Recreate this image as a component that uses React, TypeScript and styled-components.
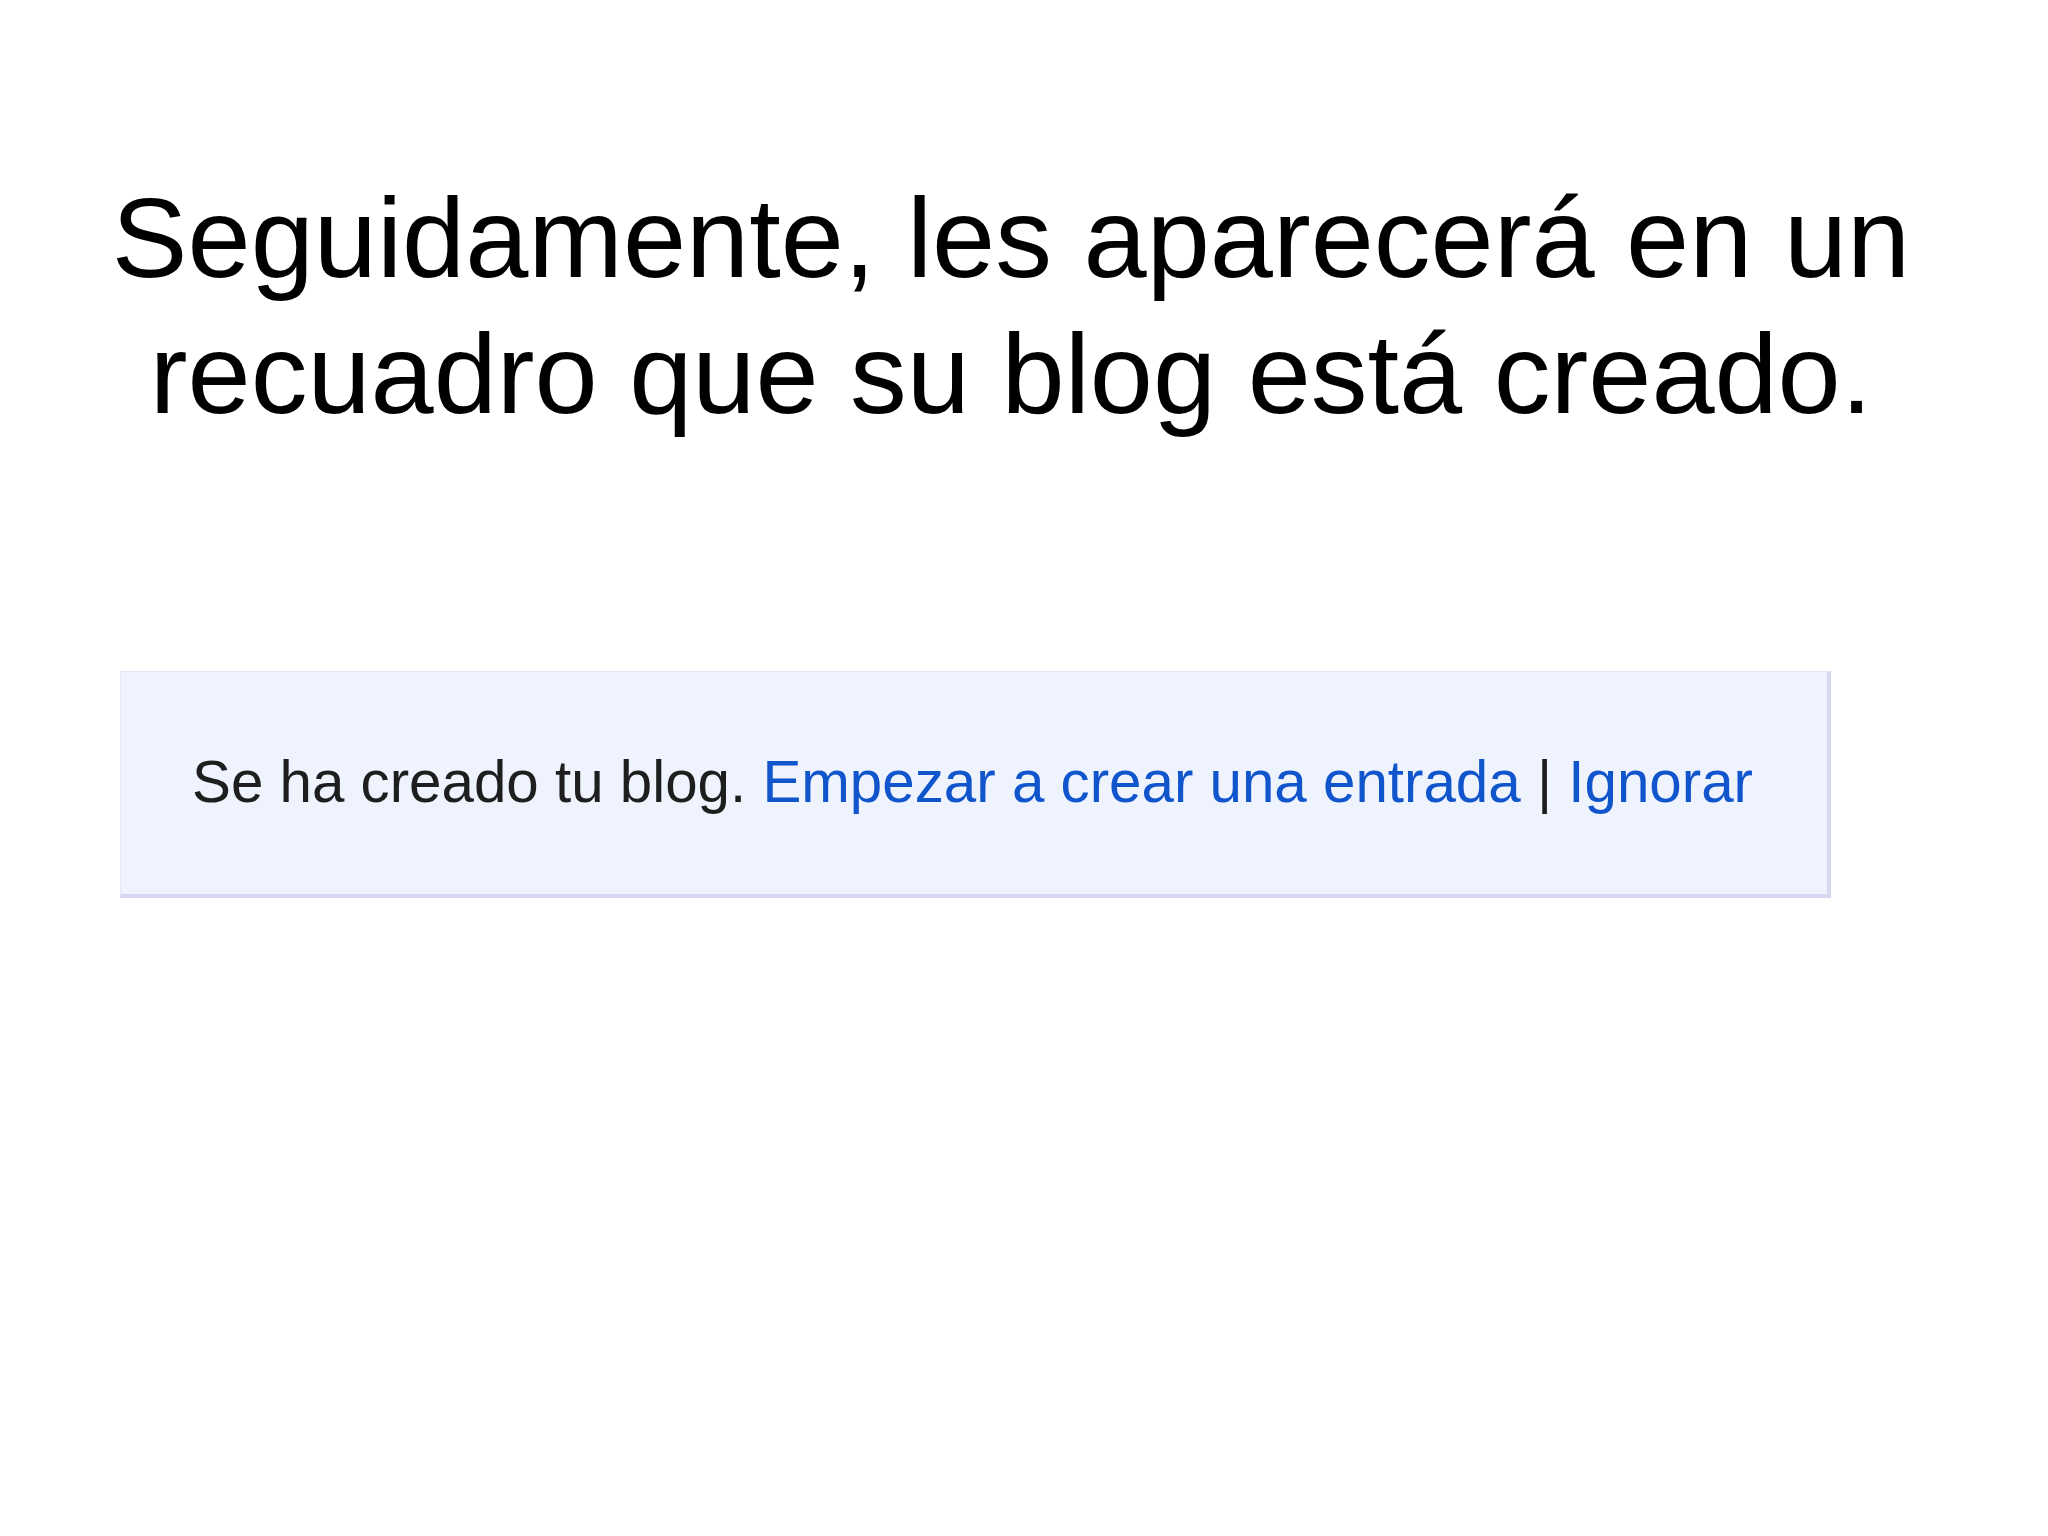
import styled, {createGlobalStyle} from "styled-components";

const GlobalStyle = createGlobalStyle`
  html, body {
    margin: 0;
    padding: 0;
    background: #ffffff;
  }
`
const Slide = styled.div`
  width: 2048px;
  height: 1536px;
  display: flex;
  flex-direction: column;
  font-family: "Liberation Sans", Arial, sans-serif;
  box-sizing: border-box;
  padding-top: 170px;
`
const Title = styled.h1`
  margin: 0 0 0 46px;
  width: 1930px;
  text-align: center;
  font-weight: 400;
  font-size: 113.5px;
  line-height: 136px;
  color: #000000;
`
const Notice = styled.div`
  margin: 229px 0 0 120px;
  width: 1711px;
  height: 227px;
  box-sizing: border-box;
  display: flex;
  align-items: center;
  padding: 0 0 4px 71px;
  background: #eef3fe;
  border-top: 1px solid #e4e9f8;
  border-left: 1px solid #e4e9f8;
  border-right: 4px solid #d5d8f0;
  border-bottom: 4px solid #d5d8f0;
`
const Message = styled.p`
  margin: 0;
  font-family: "Liberation Sans", Arial, sans-serif;
  font-size: 58.3px;
  color: #1e1e1e;
  white-space: nowrap;
`
const Link = styled.a`
  color: #1155cc;
  text-decoration: none;
`

const App = () => {
    return <Slide>
        <GlobalStyle/>
        <Title>Seguidamente, les aparecerá en un recuadro que su blog está creado.</Title>
        <Notice>
            <Message>
                Se ha creado tu blog. <Link href={'#'}>Empezar a crear una entrada</Link> | <Link href={'#'}>Ignorar</Link>
            </Message>
        </Notice>
    </Slide>
}

export default App
